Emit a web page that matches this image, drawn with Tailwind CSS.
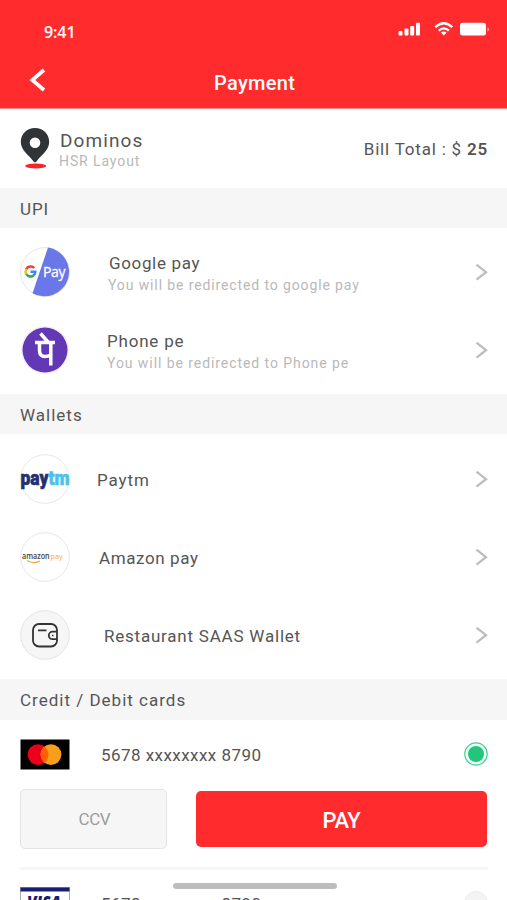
<!DOCTYPE html>
<html lang="en">
<head>
<meta charset="utf-8">
<title>Payment</title>
<script src="https://cdn.jsdelivr.net/npm/@tailwindcss/browser@4"></script>
</head>
<body class="bg-white">
<div class="relative w-[507px] h-[900px] overflow-hidden bg-white font-[Roboto,sans-serif] text-[#555] whitespace-nowrap">
  <header class="h-[108px] bg-[#ff2b2d] text-white border-b border-[#ff8c8d] box-content -mb-px">
    <div class="flex items-start justify-between h-[60px] pt-[21px] pl-[44px] pr-[17px]">
      <span class="font-['Open_Sans',sans-serif] font-semibold text-[16px] leading-[22px] tracking-[-0.1px]">9:41</span>
      <svg class="mt-[1px]" width="92" height="15" viewBox="398 22 92 15" fill="white">
        <rect x="398.5" y="31" width="4" height="4.5" rx="1"/><rect x="404.5" y="28.5" width="4" height="7" rx="1"/><rect x="410.2" y="26" width="4" height="9.500" rx="1"/><rect x="416" y="22.800" width="4" height="12.700" rx="1"/>
        <g fill="none" stroke="white" stroke-width="2.300"><path d="M435.300 27.200Q443.800 19.400 452.300 27.200"/><path d="M438.700 30.700Q443.800 26 448.900 30.700"/></g><path d="M441 32.600Q443.800 30.300 446.600 32.600L443.800 35.600Z"/>
        <rect x="460" y="22.800" width="26" height="12.800" rx="2.500"/><path d="M487.500 27v4.500q1.500-.6 1.500-2.200t-1.500-2.300Z" fill-opacity=".7"/>
      </svg>
    </div>
    <div class="flex items-center h-[48px] pb-[8px]">
      <svg class="ml-[29px]" width="18" height="24" viewBox="0 0 18 24" fill="none" stroke="white" stroke-width="3.700"><path d="M15 2 3.300 12 15 22"/></svg>
      <h1 class="ml-[167px] pt-[5px] font-medium text-[20px] tracking-[0.300px]">Payment</h1>
    </div>
  </header>

  <section class="flex items-center h-[80px] px-[20px]">
    <svg class="mt-[1px]" width="30" height="42" viewBox="0 0 30 42"><ellipse cx="15.700" cy="38" rx="10.500" ry="2.600" fill="#f5252a"/><path fill="#303437" fill-rule="evenodd" d="M15 0C7 0 .8 6 .8 13.800.8 22.500 8.500 26.500 13.300 33.300Q15 35.500 16.700 33.300C21.500 26.500 29.200 22.500 29.200 13.800 29.200 6 23 0 15 0Zm0 9.500a5.300 5.300 0 1 1 0 10.600 5.300 5.300 0 0 1 0-10.600Z"/></svg>
    <div class="ml-[9px] pt-[3px]">
      <div class="text-[19px] leading-[22px] tracking-[1.100px] pl-px">Dominos</div>
      <div class="text-[14px] leading-[18px] tracking-[0.900px] text-[#b9b9b9]">HSR Layout</div>
    </div>
    <div class="ml-auto -mr-px pt-[3px] text-[17px] tracking-[0.800px]">Bill Total : $ <b class="font-semibold">25</b></div>
  </section>

  <h2 class="h-[40px] bg-[#f6f6f6] pl-[20px] text-[17px] leading-[42px] tracking-[0.900px]">UPI</h2>
  <section class="h-[166px] py-[5px]">
    <div class="flex items-center h-[78px] px-[20px]">
      <svg width="50" height="50" viewBox="0 0 50 50"><circle cx="25" cy="25" r="24.400" fill="white" stroke="#e5e5e5"/><path fill="#6977e8" d="M28 .6A24.500 24.500 0 1 1 12.500 46.200Z"/>
        <g fill="none" stroke-width="2.500"><path stroke="#ea4335" d="M14.300 21A5 5 0 0 0 6.200 22.300"/><path stroke="#fbbc05" d="M6.200 22.300A5 5 0 0 0 6.200 27"/><path stroke="#34a853" d="M6.200 27A5 5 0 0 0 13.800 28.300"/><path stroke="#4285f4" d="M13.800 28.300Q15.400 26.800 15.300 24.800H10.500"/></g>
        <text x="23" y="29.800" font-family="Open Sans" font-size="14" textLength="22.500" fill="white" stroke="white" stroke-width=".3">Pay</text></svg>
      <div class="ml-[38px] pt-[4px]">
        <div class="text-[17px] leading-[22px] tracking-[0.650px] pl-px">Google pay</div>
        <div class="text-[14px] leading-[22px] tracking-[0.880px] text-[#b9b9b9]">You will be redirected to google pay</div>
      </div>
      <svg class="ml-auto -mr-px" width="13" height="18" viewBox="0 0 13 18" fill="none" stroke="#bdbdbd" stroke-width="2.300"><path d="m1.500 1.700 9.500 7.500-9.500 7.500"/></svg>
    </div>
    <div class="flex items-center h-[78px] px-[20px]">
      <svg width="50" height="50" viewBox="0 0 50 50"><circle cx="25" cy="25" r="24" fill="#f4eefc"/><circle cx="25" cy="25" r="22.500" fill="#6338b5"/><g fill="none" stroke="white" stroke-width="3.500"><path d="M15 17.500H35M20.500 8.500 28 17"/><path d="M30.800 17V40.500M19.500 18V25.500Q19.500 31.500 25 31.500 28 31.500 30.500 30"/></g></svg>
      <div class="ml-[37px] pt-[4px]">
        <div class="text-[17px] leading-[22px] tracking-[0.800px]">Phone pe</div>
        <div class="text-[14px] leading-[22px] tracking-[0.930px] text-[#b9b9b9]">You will be redirected to Phone pe</div>
      </div>
      <svg class="ml-auto -mr-px" width="13" height="18" viewBox="0 0 13 18" fill="none" stroke="#bdbdbd" stroke-width="2.300"><path d="m1.500 1.700 9.500 7.500-9.500 7.500"/></svg>
    </div>
  </section>

  <h2 class="h-[40px] bg-[#f6f6f6] pl-[20px] text-[17px] leading-[42px] tracking-[1px]">Wallets</h2>
  <section class="h-[245px] pt-[6px]">
    <div class="flex items-center h-[78px] px-[20px]">
      <svg width="50" height="50" viewBox="0 0 50 50"><circle cx="25" cy="25" r="24.300" fill="white" stroke="#e7e7e7"/><text x=".5" y="30.500" font-family="Roboto" font-weight="900" font-size="20" textLength="49" lengthAdjust="spacingAndGlyphs" fill="#22316f" stroke="#22316f" stroke-width=".6">pay<tspan fill="#4fc0ee" stroke="#4fc0ee">tm</tspan></text></svg>
      <div class="ml-[27px] pt-[3px] text-[17px] tracking-[0.900px]">Paytm</div>
      <svg class="ml-auto -mr-px" width="13" height="18" viewBox="0 0 13 18" fill="none" stroke="#bdbdbd" stroke-width="2.300"><path d="m1.500 1.700 9.500 7.500-9.500 7.500"/></svg>
    </div>
    <div class="flex items-center h-[78px] px-[20px]">
      <svg width="50" height="50" viewBox="0 0 50 50"><circle cx="25" cy="25" r="24.300" fill="white" stroke="#e7e7e7"/><text x="2" y="27.300" font-family="Open Sans" font-weight="600" font-size="8" textLength="40.500" lengthAdjust="spacingAndGlyphs" fill="#3d4145">amazon<tspan dx="1" font-weight="500" fill="#f5a742">pay</tspan></text><path d="M7 28.500Q13.500 32.300 20 29" fill="none" stroke="#f5a742" stroke-width="1.300"/></svg>
      <div class="ml-[29px] pt-[4px] text-[17px] tracking-[0.600px]">Amazon pay</div>
      <svg class="ml-auto -mr-px" width="13" height="18" viewBox="0 0 13 18" fill="none" stroke="#bdbdbd" stroke-width="2.300"><path d="m1.500 1.700 9.500 7.500-9.500 7.500"/></svg>
    </div>
    <div class="flex items-center h-[78px] px-[20px]">
      <svg width="50" height="50" viewBox="0 0 50 50"><circle cx="25" cy="25" r="24.300" fill="#f6f6f6" stroke="#e3e3e3"/><g fill="none" stroke="#333" stroke-width="1.800"><rect x="13" y="14" width="24" height="22.500" rx="6"/><path d="M18 20.300h8.500M37 21.700h-4.500a3.700 3.700 0 0 0 0 7.400H37"/><path d="M32 25.400h1.500" stroke-width="1.500"/></g></svg>
      <div class="ml-[34px] pt-[4px] text-[17px] tracking-[0.780px]">Restaurant SAAS Wallet</div>
      <svg class="ml-auto -mr-px" width="13" height="18" viewBox="0 0 13 18" fill="none" stroke="#bdbdbd" stroke-width="2.300"><path d="m1.500 1.700 9.500 7.500-9.500 7.500"/></svg>
    </div>
  </section>

  <h2 class="h-[41px] bg-[#f6f6f6] pl-[20px] text-[17px] leading-[43px] tracking-[1px]">Credit / Debit cards</h2>
  <section class="px-[20px]">
    <div class="flex items-center h-[69px]">
      <svg class="-mt-px" width="50" height="31" viewBox="0 0 50 31"><rect x=".5" y=".5" width="49" height="30"/><circle cx="18" cy="15.600" r="10.400" fill="#eb001b"/><circle cx="31" cy="15.600" r="10.400" fill="#f79e1b"/><path d="M24.500 7.500a10.400 10.400 0 0 1 0 16.200 10.400 10.400 0 0 1 0-16.200Z" fill="#ff5f00"/></svg>
      <div class="ml-[31px] pt-[2px] text-[17px] tracking-[0.450px]">5678 xxxxxxxx 8790</div>
      <svg class="ml-auto -mr-px -mt-px" width="24" height="24" viewBox="0 0 24 24"><circle cx="12" cy="12" r="11.200" fill="#f3fffa" stroke="#43cf91" stroke-width="1.200"/><circle cx="12" cy="12" r="8" fill="#20c67a"/></svg>
    </div>
    <div class="flex items-center h-[60px]">
      <div class="w-[147px] h-[60px] rounded-[5px] border-[1.500px] border-[#e3e3e3] bg-[#f6f6f6] text-center text-[17px] leading-[59px] tracking-[-0.500px] text-[#9c9c9c] pl-[2px]">CCV</div>
      <button class="ml-[29px] w-[292px] h-[56px] rounded-[5px] bg-[#ff2b2d] text-white text-[22px] tracking-[-0.500px] font-medium pt-[2px]">PAY</button>
    </div>
    <div class="mt-[18px] h-[3px] -mr-px bg-[#f7f7f7]"></div>
    <div class="flex items-start pt-[17px]">
      <svg width="50" height="31" viewBox="0 0 50 31"><rect x=".5" y=".5" width="49" height="30" fill="white" stroke="#aaa"/><path d="M.5 .5h49v4H.5Z" fill="#1a1f71"/><text x="7" y="22.500" font-family="Open Sans" font-style="italic" font-weight="800" font-size="18.500" textLength="34" lengthAdjust="spacingAndGlyphs" fill="#1a1f71">VISA</text></svg>
      <div class="ml-[31px] pt-[7px] text-[17px] leading-[20px] tracking-[0.450px]">5678 xxxxxxxx 8790</div>
      <div class="ml-auto -mr-px mt-[4px] size-[24px] rounded-full border border-[#ececec] bg-[#f4f4f4]"></div>
    </div>
  </section>
  <div class="absolute left-[173px] top-[883px] w-[164px] h-[6px] rounded-full bg-[#bdbdbd]"></div>
</div>
</body>
</html>
